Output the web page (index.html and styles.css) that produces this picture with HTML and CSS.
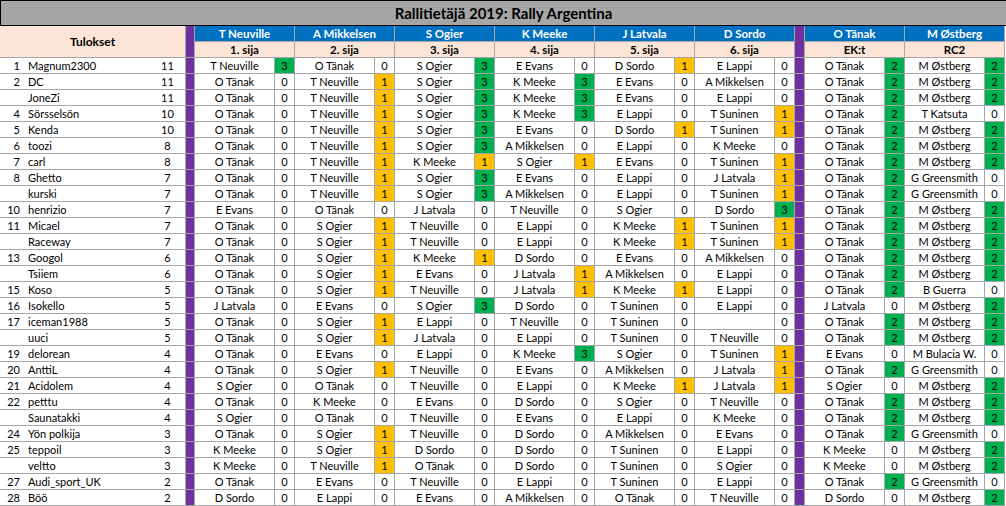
FILE: index.html
```html
<!DOCTYPE html>
<html lang="fi">
<head>
<meta charset="utf-8">
<title>Rallitietäjä 2019: Rally Argentina</title>
<link rel="stylesheet" href="styles.css">
</head>
<body>
<div class="sheet">
  <div class="title">Rallitietäjä 2019: Rally Argentina</div>
  <div class="grid">
    <div class="tul">Tulokset</div>
    <div class="pu ph"></div>
    <div class="hd">T Neuville</div>
    <div class="hd">A Mikkelsen</div>
    <div class="hd">S Ogier</div>
    <div class="hd">K Meeke</div>
    <div class="hd">J Latvala</div>
    <div class="hd">D Sordo</div>
    <div class="pu ph pu2"></div>
    <div class="hd">O Tänak</div>
    <div class="hd">M Østberg</div>
    <div class="sub">1. sija</div>
    <div class="sub">2. sija</div>
    <div class="sub">3. sija</div>
    <div class="sub">4. sija</div>
    <div class="sub">5. sija</div>
    <div class="sub">6. sija</div>
    <div class="sub">EK:t</div>
    <div class="sub">RC2</div>

    <div class="t"><span class="rk">1</span><span class="nm">Magnum2300</span><span class="pt">11</span></div><div class="pu"></div>
    <div class="n">T Neuville</div><div class="s g">3</div><div class="n">O Tänak</div><div class="s">0</div><div class="n">S Ogier</div><div class="s g">3</div><div class="n">E Evans</div><div class="s">0</div><div class="n">D Sordo</div><div class="s y">1</div><div class="n">E Lappi</div><div class="s">0</div><div class="pu pu2"></div><div class="n">O Tänak</div><div class="s g">2</div><div class="n">M Østberg</div><div class="s g">2</div>

    <div class="t"><span class="rk">2</span><span class="nm">DC</span><span class="pt">11</span></div><div class="pu"></div>
    <div class="n">O Tänak</div><div class="s">0</div><div class="n">T Neuville</div><div class="s y">1</div><div class="n">S Ogier</div><div class="s g">3</div><div class="n">K Meeke</div><div class="s g">3</div><div class="n">E Evans</div><div class="s">0</div><div class="n">A Mikkelsen</div><div class="s">0</div><div class="pu pu2"></div><div class="n">O Tänak</div><div class="s g">2</div><div class="n">M Østberg</div><div class="s g">2</div>

    <div class="t"><span class="rk"></span><span class="nm">JoneZi</span><span class="pt">11</span></div><div class="pu"></div>
    <div class="n">O Tänak</div><div class="s">0</div><div class="n">T Neuville</div><div class="s y">1</div><div class="n">S Ogier</div><div class="s g">3</div><div class="n">K Meeke</div><div class="s g">3</div><div class="n">E Evans</div><div class="s">0</div><div class="n">E Lappi</div><div class="s">0</div><div class="pu pu2"></div><div class="n">O Tänak</div><div class="s g">2</div><div class="n">M Østberg</div><div class="s g">2</div>

    <div class="t"><span class="rk">4</span><span class="nm">Sörsselsön</span><span class="pt">10</span></div><div class="pu"></div>
    <div class="n">O Tänak</div><div class="s">0</div><div class="n">T Neuville</div><div class="s y">1</div><div class="n">S Ogier</div><div class="s g">3</div><div class="n">K Meeke</div><div class="s g">3</div><div class="n">E Lappi</div><div class="s">0</div><div class="n">T Suninen</div><div class="s y">1</div><div class="pu pu2"></div><div class="n">O Tänak</div><div class="s g">2</div><div class="n">T Katsuta</div><div class="s">0</div>

    <div class="t"><span class="rk">5</span><span class="nm">Kenda</span><span class="pt">10</span></div><div class="pu"></div>
    <div class="n">O Tänak</div><div class="s">0</div><div class="n">T Neuville</div><div class="s y">1</div><div class="n">S Ogier</div><div class="s g">3</div><div class="n">E Evans</div><div class="s">0</div><div class="n">D Sordo</div><div class="s y">1</div><div class="n">T Suninen</div><div class="s y">1</div><div class="pu pu2"></div><div class="n">O Tänak</div><div class="s g">2</div><div class="n">M Østberg</div><div class="s g">2</div>

    <div class="t"><span class="rk">6</span><span class="nm">toozi</span><span class="pt">8</span></div><div class="pu"></div>
    <div class="n">O Tänak</div><div class="s">0</div><div class="n">T Neuville</div><div class="s y">1</div><div class="n">S Ogier</div><div class="s g">3</div><div class="n">A Mikkelsen</div><div class="s">0</div><div class="n">E Lappi</div><div class="s">0</div><div class="n">K Meeke</div><div class="s">0</div><div class="pu pu2"></div><div class="n">O Tänak</div><div class="s g">2</div><div class="n">M Østberg</div><div class="s g">2</div>

    <div class="t"><span class="rk">7</span><span class="nm">carl</span><span class="pt">8</span></div><div class="pu"></div>
    <div class="n">O Tänak</div><div class="s">0</div><div class="n">T Neuville</div><div class="s y">1</div><div class="n">K Meeke</div><div class="s y">1</div><div class="n">S Ogier</div><div class="s y">1</div><div class="n">E Evans</div><div class="s">0</div><div class="n">T Suninen</div><div class="s y">1</div><div class="pu pu2"></div><div class="n">O Tänak</div><div class="s g">2</div><div class="n">M Østberg</div><div class="s g">2</div>

    <div class="t"><span class="rk">8</span><span class="nm">Ghetto</span><span class="pt">7</span></div><div class="pu"></div>
    <div class="n">O Tänak</div><div class="s">0</div><div class="n">T Neuville</div><div class="s y">1</div><div class="n">S Ogier</div><div class="s g">3</div><div class="n">E Evans</div><div class="s">0</div><div class="n">E Lappi</div><div class="s">0</div><div class="n">J Latvala</div><div class="s y">1</div><div class="pu pu2"></div><div class="n">O Tänak</div><div class="s g">2</div><div class="n">G Greensmith</div><div class="s">0</div>

    <div class="t"><span class="rk"></span><span class="nm">kurski</span><span class="pt">7</span></div><div class="pu"></div>
    <div class="n">O Tänak</div><div class="s">0</div><div class="n">T Neuville</div><div class="s y">1</div><div class="n">S Ogier</div><div class="s g">3</div><div class="n">A Mikkelsen</div><div class="s">0</div><div class="n">E Lappi</div><div class="s">0</div><div class="n">T Suninen</div><div class="s y">1</div><div class="pu pu2"></div><div class="n">O Tänak</div><div class="s g">2</div><div class="n">G Greensmith</div><div class="s">0</div>

    <div class="t"><span class="rk">10</span><span class="nm">henrizio</span><span class="pt">7</span></div><div class="pu"></div>
    <div class="n">E Evans</div><div class="s">0</div><div class="n">O Tänak</div><div class="s">0</div><div class="n">J Latvala</div><div class="s">0</div><div class="n">T Neuville</div><div class="s">0</div><div class="n">S Ogier</div><div class="s">0</div><div class="n">D Sordo</div><div class="s g">3</div><div class="pu pu2"></div><div class="n">O Tänak</div><div class="s g">2</div><div class="n">M Østberg</div><div class="s g">2</div>

    <div class="t"><span class="rk">11</span><span class="nm">Micael</span><span class="pt">7</span></div><div class="pu"></div>
    <div class="n">O Tänak</div><div class="s">0</div><div class="n">S Ogier</div><div class="s y">1</div><div class="n">T Neuville</div><div class="s">0</div><div class="n">E Lappi</div><div class="s">0</div><div class="n">K Meeke</div><div class="s y">1</div><div class="n">T Suninen</div><div class="s y">1</div><div class="pu pu2"></div><div class="n">O Tänak</div><div class="s g">2</div><div class="n">M Østberg</div><div class="s g">2</div>

    <div class="t"><span class="rk"></span><span class="nm">Raceway</span><span class="pt">7</span></div><div class="pu"></div>
    <div class="n">O Tänak</div><div class="s">0</div><div class="n">S Ogier</div><div class="s y">1</div><div class="n">T Neuville</div><div class="s">0</div><div class="n">E Lappi</div><div class="s">0</div><div class="n">K Meeke</div><div class="s y">1</div><div class="n">T Suninen</div><div class="s y">1</div><div class="pu pu2"></div><div class="n">O Tänak</div><div class="s g">2</div><div class="n">M Østberg</div><div class="s g">2</div>

    <div class="t"><span class="rk">13</span><span class="nm">Googol</span><span class="pt">6</span></div><div class="pu"></div>
    <div class="n">O Tänak</div><div class="s">0</div><div class="n">S Ogier</div><div class="s y">1</div><div class="n">K Meeke</div><div class="s y">1</div><div class="n">D Sordo</div><div class="s">0</div><div class="n">E Evans</div><div class="s">0</div><div class="n">A Mikkelsen</div><div class="s">0</div><div class="pu pu2"></div><div class="n">O Tänak</div><div class="s g">2</div><div class="n">M Østberg</div><div class="s g">2</div>

    <div class="t"><span class="rk"></span><span class="nm">Tsiiem</span><span class="pt">6</span></div><div class="pu"></div>
    <div class="n">O Tänak</div><div class="s">0</div><div class="n">S Ogier</div><div class="s y">1</div><div class="n">E Evans</div><div class="s">0</div><div class="n">J Latvala</div><div class="s y">1</div><div class="n">A Mikkelsen</div><div class="s">0</div><div class="n">E Lappi</div><div class="s">0</div><div class="pu pu2"></div><div class="n">O Tänak</div><div class="s g">2</div><div class="n">M Østberg</div><div class="s g">2</div>

    <div class="t"><span class="rk">15</span><span class="nm">Koso</span><span class="pt">5</span></div><div class="pu"></div>
    <div class="n">O Tänak</div><div class="s">0</div><div class="n">S Ogier</div><div class="s y">1</div><div class="n">T Neuville</div><div class="s">0</div><div class="n">J Latvala</div><div class="s y">1</div><div class="n">K Meeke</div><div class="s y">1</div><div class="n">E Lappi</div><div class="s">0</div><div class="pu pu2"></div><div class="n">O Tänak</div><div class="s g">2</div><div class="n">B Guerra</div><div class="s">0</div>

    <div class="t"><span class="rk">16</span><span class="nm">Isokello</span><span class="pt">5</span></div><div class="pu"></div>
    <div class="n">J Latvala</div><div class="s">0</div><div class="n">E Evans</div><div class="s">0</div><div class="n">S Ogier</div><div class="s g">3</div><div class="n">D Sordo</div><div class="s">0</div><div class="n">T Suninen</div><div class="s">0</div><div class="n">E Lappi</div><div class="s">0</div><div class="pu pu2"></div><div class="n">J Latvala</div><div class="s">0</div><div class="n">M Østberg</div><div class="s g">2</div>

    <div class="t"><span class="rk">17</span><span class="nm">iceman1988</span><span class="pt">5</span></div><div class="pu"></div>
    <div class="n">O Tänak</div><div class="s">0</div><div class="n">S Ogier</div><div class="s y">1</div><div class="n">E Lappi</div><div class="s">0</div><div class="n">T Neuville</div><div class="s">0</div><div class="n">T Suninen</div><div class="s">0</div><div class="n"></div><div class="s">0</div><div class="pu pu2"></div><div class="n">O Tänak</div><div class="s g">2</div><div class="n">M Østberg</div><div class="s g">2</div>

    <div class="t"><span class="rk"></span><span class="nm">uuci</span><span class="pt">5</span></div><div class="pu"></div>
    <div class="n">O Tänak</div><div class="s">0</div><div class="n">S Ogier</div><div class="s y">1</div><div class="n">J Latvala</div><div class="s">0</div><div class="n">E Lappi</div><div class="s">0</div><div class="n">T Suninen</div><div class="s">0</div><div class="n">T Neuville</div><div class="s">0</div><div class="pu pu2"></div><div class="n">O Tänak</div><div class="s g">2</div><div class="n">M Østberg</div><div class="s g">2</div>

    <div class="t"><span class="rk">19</span><span class="nm">delorean</span><span class="pt">4</span></div><div class="pu"></div>
    <div class="n">O Tänak</div><div class="s">0</div><div class="n">E Evans</div><div class="s">0</div><div class="n">E Lappi</div><div class="s">0</div><div class="n">K Meeke</div><div class="s g">3</div><div class="n">S Ogier</div><div class="s">0</div><div class="n">T Suninen</div><div class="s y">1</div><div class="pu pu2"></div><div class="n">E Evans</div><div class="s">0</div><div class="n">M Bulacia W.</div><div class="s">0</div>

    <div class="t"><span class="rk">20</span><span class="nm">AnttiL</span><span class="pt">4</span></div><div class="pu"></div>
    <div class="n">O Tänak</div><div class="s">0</div><div class="n">S Ogier</div><div class="s y">1</div><div class="n">T Neuville</div><div class="s">0</div><div class="n">E Evans</div><div class="s">0</div><div class="n">A Mikkelsen</div><div class="s">0</div><div class="n">J Latvala</div><div class="s y">1</div><div class="pu pu2"></div><div class="n">O Tänak</div><div class="s g">2</div><div class="n">G Greensmith</div><div class="s">0</div>

    <div class="t"><span class="rk">21</span><span class="nm">Acidolem</span><span class="pt">4</span></div><div class="pu"></div>
    <div class="n">S Ogier</div><div class="s">0</div><div class="n">O Tänak</div><div class="s">0</div><div class="n">T Neuville</div><div class="s">0</div><div class="n">E Lappi</div><div class="s">0</div><div class="n">K Meeke</div><div class="s y">1</div><div class="n">J Latvala</div><div class="s y">1</div><div class="pu pu2"></div><div class="n">S Ogier</div><div class="s">0</div><div class="n">M Østberg</div><div class="s g">2</div>

    <div class="t"><span class="rk">22</span><span class="nm">petttu</span><span class="pt">4</span></div><div class="pu"></div>
    <div class="n">O Tänak</div><div class="s">0</div><div class="n">K Meeke</div><div class="s">0</div><div class="n">E Evans</div><div class="s">0</div><div class="n">D Sordo</div><div class="s">0</div><div class="n">S Ogier</div><div class="s">0</div><div class="n">T Neuville</div><div class="s">0</div><div class="pu pu2"></div><div class="n">O Tänak</div><div class="s g">2</div><div class="n">M Østberg</div><div class="s g">2</div>

    <div class="t"><span class="rk"></span><span class="nm">Saunatakki</span><span class="pt">4</span></div><div class="pu"></div>
    <div class="n">S Ogier</div><div class="s">0</div><div class="n">O Tänak</div><div class="s">0</div><div class="n">T Neuville</div><div class="s">0</div><div class="n">E Evans</div><div class="s">0</div><div class="n">E Lappi</div><div class="s">0</div><div class="n">K Meeke</div><div class="s">0</div><div class="pu pu2"></div><div class="n">O Tänak</div><div class="s g">2</div><div class="n">M Østberg</div><div class="s g">2</div>

    <div class="t"><span class="rk">24</span><span class="nm">Yön polkija</span><span class="pt">3</span></div><div class="pu"></div>
    <div class="n">O Tänak</div><div class="s">0</div><div class="n">S Ogier</div><div class="s y">1</div><div class="n">T Neuville</div><div class="s">0</div><div class="n">D Sordo</div><div class="s">0</div><div class="n">A Mikkelsen</div><div class="s">0</div><div class="n">E Evans</div><div class="s">0</div><div class="pu pu2"></div><div class="n">O Tänak</div><div class="s g">2</div><div class="n">G Greensmith</div><div class="s">0</div>

    <div class="t"><span class="rk">25</span><span class="nm">teppoil</span><span class="pt">3</span></div><div class="pu"></div>
    <div class="n">K Meeke</div><div class="s">0</div><div class="n">S Ogier</div><div class="s y">1</div><div class="n">D Sordo</div><div class="s">0</div><div class="n">D Sordo</div><div class="s">0</div><div class="n">T Suninen</div><div class="s">0</div><div class="n">E Lappi</div><div class="s">0</div><div class="pu pu2"></div><div class="n">K Meeke</div><div class="s">0</div><div class="n">M Østberg</div><div class="s g">2</div>

    <div class="t"><span class="rk"></span><span class="nm">veltto</span><span class="pt">3</span></div><div class="pu"></div>
    <div class="n">K Meeke</div><div class="s">0</div><div class="n">T Neuville</div><div class="s y">1</div><div class="n">O Tänak</div><div class="s">0</div><div class="n">D Sordo</div><div class="s">0</div><div class="n">T Suninen</div><div class="s">0</div><div class="n">S Ogier</div><div class="s">0</div><div class="pu pu2"></div><div class="n">K Meeke</div><div class="s">0</div><div class="n">M Østberg</div><div class="s g">2</div>

    <div class="t"><span class="rk">27</span><span class="nm">Audi_sport_UK</span><span class="pt">2</span></div><div class="pu"></div>
    <div class="n">O Tänak</div><div class="s">0</div><div class="n">E Evans</div><div class="s">0</div><div class="n">T Neuville</div><div class="s">0</div><div class="n">E Lappi</div><div class="s">0</div><div class="n">T Suninen</div><div class="s">0</div><div class="n">E Lappi</div><div class="s">0</div><div class="pu pu2"></div><div class="n">O Tänak</div><div class="s g">2</div><div class="n">G Greensmith</div><div class="s">0</div>

    <div class="t"><span class="rk">28</span><span class="nm">Böö</span><span class="pt">2</span></div><div class="pu"></div>
    <div class="n">D Sordo</div><div class="s">0</div><div class="n">E Lappi</div><div class="s">0</div><div class="n">E Evans</div><div class="s">0</div><div class="n">A Mikkelsen</div><div class="s">0</div><div class="n">O Tänak</div><div class="s">0</div><div class="n">T Neuville</div><div class="s">0</div><div class="pu pu2"></div><div class="n">D Sordo</div><div class="s">0</div><div class="n">M Østberg</div><div class="s g">2</div>
  </div>
</div>
</body>
</html>
```

FILE: styles.css
```css
html, body {
  margin: 0;
  padding: 0;
  background: #ffffff;
}

body {
  font-family: Lato, "Liberation Sans", sans-serif;
  font-size: 11px;
  color: #000000;
}

.sheet {
  width: 1006px;
}

.title {
  height: 24px;
  border: 1px solid #000000;
  border-right: none;
  background: #a6a6a6;
  font-weight: bold;
  font-size: 15px;
  display: flex;
  align-items: center;
  justify-content: center;
}

.grid {
  display: grid;
  grid-template-columns: 185px 8px repeat(6, 79px 19px) 9px repeat(2, 79px 19px);
  grid-auto-rows: 15px;
  gap: 1px;
  background: #a6a6a6;
  width: max-content;
  padding: 0 1px 1px 0;
}

.grid > div {
  line-height: 15px;
  white-space: nowrap;
  overflow: hidden;
}

.tul {
  grid-row: span 2;
  background: #fce4d6;
  font-weight: bold;
  font-size: 12px;
  display: flex;
  align-items: center;
  justify-content: center;
}

.pu {
  background: #7030a0;
}

.ph {
  grid-row: span 2;
}

.hd {
  grid-column: span 2;
  background: #0070c0;
  color: #ffffff;
  font-weight: bold;
  font-size: 11.5px;
  text-align: center;
}

.sub {
  grid-column: span 2;
  background: #fce4d6;
  font-weight: bold;
  font-size: 11.5px;
  text-align: center;
}

.t {
  display: flex;
  background: #ffffff;
}

.rk {
  width: 20px;
  text-align: right;
}

.nm {
  width: 122px;
  padding-left: 8px;
}

.pt {
  width: 35px;
  text-align: center;
}

.n {
  background: #ffffff;
  text-align: center;
}

.s {
  background: #ffffff;
  text-align: center;
}

.s.g {
  background: #00b050;
}

.s.y {
  background: #ffc000;
}
```
